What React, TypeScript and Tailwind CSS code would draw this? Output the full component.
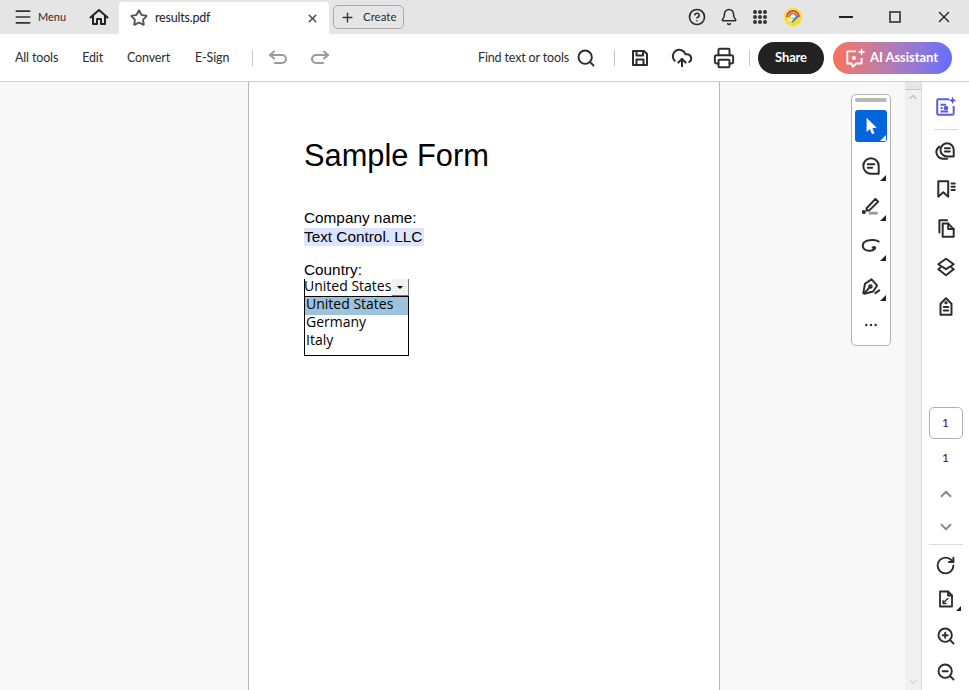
import { ChevronDown, ChevronUp, Ellipsis, Menu, Plus, Printer, RotateCw, Search, Star, X, ZoomIn, ZoomOut, Bell, CircleHelp, CloudUpload } from "lucide-react";
import type { ReactNode } from "react";

const uiFont = "font-['Lato','Noto_Sans',sans-serif]";

function Corner({ white }: { white?: boolean }) {
  return (
    <span
      className={`absolute right-[1px] bottom-[1px] h-0 w-0 border-l-[6px] border-l-transparent ${
        white ? "border-b-[6px] border-b-white" : "border-b-[6px] border-b-[#222]"
      }`}
    />
  );
}

function Icon24({ children, className }: { children: ReactNode; className?: string }) {
  return (
    <svg viewBox="0 0 20 20" fill="none" stroke="#2c2c2c" strokeWidth="1.8" strokeLinecap="round" strokeLinejoin="round" className={className ?? "h-[22px] w-[22px]"}>
      {children}
    </svg>
  );
}

function ToolButton({ children, className }: { children: ReactNode; className: string }) {
  return <div className={`relative flex h-8 w-8 items-center justify-center ${className}`}>{children}</div>;
}

function FloatingTools() {
  return (
    <div className="absolute top-[12px] left-[851px] flex h-[252px] w-10 flex-col items-center rounded-[5px] border border-[#b1b1b1] bg-white px-[3px] pt-[3px]">
      <div className="h-1 w-8 rounded-sm bg-[#b8b8b8]" />
      <ToolButton className="mt-2 rounded-[3px] bg-[#0265dc]">
        <svg viewBox="0 0 20 20" className="h-[22px] w-[22px]" fill="white">
          <path d="M6 2.5 L6 15.5 L9 12.8 L11 17.5 L13.2 16.5 L11.2 12 L15.2 11.6 Z" />
        </svg>
        <Corner white />
      </ToolButton>
      <ToolButton className="mt-2">
        <Icon24>
          <path d="M10 3 a7 7 0 1 0 0 14 h7 v-7 a7 7 0 0 0 -7 -7 Z" />
          <path d="M7 8.5 h6 M7 11.5 h4" />
        </Icon24>
        <Corner />
      </ToolButton>
      <ToolButton className="mt-2">
        <Icon24>
          <path d="M6 12 L14 3.5 L16.5 6 L8.5 14 L6 14 Z" />
          <circle cx="3.5" cy="15.5" r="1" fill="#2c2c2c" />
          <path d="M8 16.5 H16" stroke="#9a9a9a" strokeWidth="2.6" strokeLinecap="butt" />
        </Icon24>
        <Corner />
      </ToolButton>
      <ToolButton className="mt-2">
        <Icon24>
          <path d="M17 6 C14 3.5 2.5 4 2.5 9.5 C2.5 15 11 15.5 13.5 12.5 C14.5 11 13 10.5 11.5 11.5" />
        </Icon24>
        <Corner />
      </ToolButton>
      <ToolButton className="mt-2">
        <Icon24>
          <path d="M3 16.5 L4.5 8 L10.5 4 L15.5 9.5 L12 15 L4 17 Z" />
          <path d="M4 16.5 L8.5 11.5" />
          <circle cx="9.5" cy="10.5" r="1.2" />
          <path d="M14 16.5 L17.5 14" />
        </Icon24>
        <Corner />
      </ToolButton>
      <ToolButton className="mt-[7px]">
        <Ellipsis className="h-4 w-4 text-[#333]" strokeWidth={1.8} />
      </ToolButton>
    </div>
  );
}

function RightRail() {
  return (
    <aside className="flex w-[48px] shrink-0 flex-col items-center border-l border-[#dcdcdc] bg-white">
      <div className="mt-[14px] flex h-[22px] items-center justify-center">
        <svg viewBox="0 0 20 20" fill="none" stroke="#5c5ce0" strokeWidth="1.8" strokeLinejoin="round" className="h-[22px] w-[22px]">
          <path d="M13 3 H3 a1 1 0 0 0 -1 1 V16 a1 1 0 0 0 1 1 H16 a1 1 0 0 0 1 -1 V9" />
          <path d="M5 8 h5 M5 14 h7" />
          <path d="M5 11 h2" />
          <circle cx="10" cy="11" r="1.2" fill="#5c5ce0" />
          <path d="M16 0.5 L17 3 L19.5 4 L17 5 L16 7.5 L15 5 L12.5 4 L15 3 Z" fill="#5c5ce0" stroke="none" />
        </svg>
      </div>
      <div className="mt-[11px] h-px w-6 bg-[#dcdcdc]" />
      <Icon24 className="mt-[10px] h-[22px] w-[22px]">
        <path d="M11 3 a6 6 0 1 0 0 12 h6 v-6 a6 6 0 0 0 -6 -6 Z" />
        <path d="M9 7.5 h4.5 M9 10.5 h4.5" />
        <path d="M4 6 a6 6 0 0 0 3 11 h4" />
      </Icon24>
      <Icon24 className="mt-[16px] h-[22px] w-[22px]">
        <path d="M3 3 H12 V17 L7.5 13 L3 17 Z" />
        <path d="M15 5 h3 M15 8 h3 M15 11 h3" />
      </Icon24>
      <Icon24 className="mt-[17px] h-[22px] w-[22px]">
        <path d="M7 6 H12 L17 11 V18 H7 Z" />
        <path d="M12 6 V11 H17" />
        <path d="M4 14 V3 H11" />
      </Icon24>
      <Icon24 className="mt-[17px] h-[22px] w-[22px]">
        <path d="M10 2.5 L17 7.5 L10 12 L3 7.5 Z" />
        <path d="M5 10.5 L3 12 L10 17.5 L17 12 L15 10.5" />
      </Icon24>
      <Icon24 className="mt-[17px] h-[22px] w-[22px]">
        <path d="M5 8 L10 3 L15 8 V18 H5 Z" />
        <path d="M8 11 h4 M8 14 h4" />
        <circle cx="10" cy="7" r=".6" />
      </Icon24>
      <div className="mt-[90px] flex h-8 w-[34px] items-center justify-center rounded-[5px] border border-[#b1b1b1] text-xs text-[#4a0d33]">
        1
      </div>
      <div className="mt-[10px] text-xs leading-[18px] text-[#4a0d33]">1</div>
      <ChevronUp className="mt-[18px] h-[18px] w-[18px] text-[#8e8e8e]" strokeWidth={2.8} />
      <ChevronDown className="mt-[15px] h-[18px] w-[18px] text-[#8e8e8e]" strokeWidth={2.8} />
      <div className="mt-[8px] h-px w-[34px] bg-[#dcdcdc]" />
      <RotateCw className="mt-[10px] h-[21px] w-[21px] text-[#2c2c2c]" strokeWidth={2.2} />
      <div className="relative mt-[13px] h-5 w-5">
        <Icon24 className="h-5 w-5">
          <path d="M4 2.5 H12 L16 6.5 V17.5 H4 Z" />
          <path d="M12 2.5 V6.5 H16" />
          <path d="M8 13 L12 9.5 M7 11.5 V14.5 H10" strokeWidth="1.3" />
        </Icon24>
        <span className="absolute -right-[5px] bottom-[-2px] h-0 w-0 border-b-[5px] border-l-[5px] border-b-[#222] border-l-transparent" />
      </div>
      <ZoomIn className="mt-[17px] h-5 w-5 text-[#2c2c2c]" strokeWidth={2.3} />
      <ZoomOut className="mt-[16px] h-5 w-5 text-[#2c2c2c]" strokeWidth={2.3} />
    </aside>
  );
}

export default function App() {
  return (
    <div className={`flex h-[690px] w-[969px] flex-col overflow-hidden bg-white ${uiFont} text-[#2c2c2c]`}>
      {/* Title bar */}
      <header className="flex h-[34px] shrink-0 items-center bg-[#e5e5e5]">
        <Menu className="ml-[13px] h-5 w-5 text-[#333]" strokeWidth={2} />
        <span className="mt-px ml-[5px] w-[30px] text-[11px]">Menu</span>
        <svg viewBox="0 0 20 20" fill="none" stroke="#222" strokeWidth="2" strokeLinejoin="round" strokeLinecap="round" className="ml-[21px] h-5 w-5">
          <path d="M1.5 10.5 L10 3 L18.5 10.5" />
          <path d="M4 9 V17 H8 V12 H12 V17 H16 V9" />
        </svg>
        <div className="mt-[2px] ml-[10px] flex h-8 w-[210px] items-center rounded-t-[4px] bg-white pr-[10px] pl-[11px]">
          <Star className="h-[18px] w-[18px] text-[#555]" strokeWidth={2.5} />
          <span className="ml-[7px] text-[12.5px] tracking-[-0.2px] text-[#222]">results.pdf</span>
          <X className="ml-auto h-[13px] w-[13px] text-[#555]" strokeWidth={3} />
        </div>
        <div className="ml-1 flex h-6 w-[71px] items-center rounded-[5px] border border-[#a8a8a8] pl-[6px]">
          <Plus className="h-[15px] w-[15px] text-[#333]" strokeWidth={2.2} />
          <span className="ml-[8px] text-[11.5px]">Create</span>
        </div>
        <CircleHelp className="ml-[284px] h-[18px] w-[18px] text-[#2c2c2c]" strokeWidth={2.2} />
        <Bell className="ml-[14px] h-[18px] w-[18px] text-[#2c2c2c]" strokeWidth={2.1} />
        <div className="ml-[15px] grid h-[14px] w-[14px] grid-cols-3 gap-[1px]">
          {Array.from({ length: 9 }).map((_, i) => (
            <span key={i} className="rounded-full bg-[#333]" />
          ))}
        </div>
        <svg viewBox="0 0 18 18" className="ml-[17px] h-[18px] w-[18px]">
          <circle cx="9" cy="9" r="9" fill="#f6df1c" />
          <path d="M3 9 a6 6 0 0 1 12 0" fill="none" stroke="#e0455f" strokeWidth="2" />
          <path d="M5.5 9 a3.5 3.5 0 0 1 7 0" fill="#ffffff" stroke="#7a4fb5" strokeWidth="1.2" />
          <path d="M8 14 L14 8" stroke="#2f83e6" strokeWidth="1.8" />
          <ellipse cx="6" cy="12" rx="3" ry="1.4" fill="#f4f1e0" />
        </svg>
        <div className="ml-[37px] h-[2px] w-[14px] bg-[#222]" />
        <div className="ml-[36px] h-[12px] w-[12px] border-2 border-[#555]" />
        <X className="ml-[34px] h-[18px] w-[18px] text-[#222]" strokeWidth={1.8} />
      </header>

      {/* Toolbar */}
      <nav className="flex h-[48px] shrink-0 items-center border-b border-[#d0d0d0] text-[12.5px] tracking-[-0.15px]">
        <span className="mt-[2px] ml-[15px]">All tools</span>
        <span className="mt-[2px] ml-[24px]">Edit</span>
        <span className="mt-[2px] ml-[24px]">Convert</span>
        <span className="mt-[2px] ml-[25px]">E-Sign</span>
        <div className="ml-[23px] h-4 w-px bg-[#c8c8c8]" />
        <svg viewBox="0 0 20 20" fill="none" stroke="#9a9a9a" strokeWidth="2" strokeLinecap="round" strokeLinejoin="round" className="ml-[15px] h-5 w-5">
          <path d="M2 7 H14 a4 4 0 0 1 0 8 H7" />
          <path d="M6 3.5 L2 7 L6 10.5" />
        </svg>
        <svg viewBox="0 0 20 20" fill="none" stroke="#9a9a9a" strokeWidth="2" strokeLinecap="round" strokeLinejoin="round" className="ml-[22px] h-5 w-5">
          <path d="M18 7 H6 a4 4 0 0 0 0 8 H13" />
          <path d="M14 3.5 L18 7 L14 10.5" />
        </svg>
        <span className="mt-[2px] ml-auto">Find text or tools</span>
        <Search className="ml-[7px] h-5 w-5" strokeWidth={2.3} />
        <div className="ml-[18px] h-4 w-px bg-[#c8c8c8]" />
        <svg viewBox="0 0 20 20" fill="none" stroke="#2c2c2c" strokeWidth="2" strokeLinejoin="round" className="ml-[15px] h-5 w-5">
          <path d="M3 3 H14 L17 6 V17 H3 Z" />
          <path d="M6.5 3 V7.5 H13 V3" />
          <path d="M6.5 17 V11.5 H13.5 V17" />
        </svg>
        <CloudUpload className="ml-[21px] h-[22px] w-[22px]" strokeWidth={2.2} />
        <Printer className="ml-[20px] h-[22px] w-[22px]" strokeWidth={2.1} />
        <div className="ml-[14px] h-4 w-px bg-[#c8c8c8]" />
        <button className="ml-2 flex h-8 w-[66px] items-center justify-center rounded-full bg-[#222] pt-px text-[13px] font-bold text-white">
          Share
        </button>
        <button className="mr-[17px] ml-[9px] flex h-8 w-[119px] items-center gap-[4px] rounded-full bg-gradient-to-r from-[#fb7158] to-[#636bff] pt-px pl-[11px] text-[13px] font-bold tracking-[-0.05px] text-white">
          <svg viewBox="0 0 20 20" fill="none" stroke="white" strokeWidth="1.7" strokeLinejoin="round" className="h-[22px] w-[22px]">
            <path d="M11 4 H3 V15 H7 L8 18 L11 15 H16 V10" />
            <circle cx="9" cy="10" r="1" fill="white" />
            <path d="M16 1 L17 3.5 L19.5 4.5 L17 5.5 L16 8 L15 5.5 L12.5 4.5 L15 3.5 Z" fill="white" stroke="none" />
          </svg>
          AI Assistant
        </button>
      </nav>

      {/* Document area */}
      <main className="relative flex min-h-0 flex-1">
        <div className="w-[248px] shrink-0 bg-[#f8f8f8]" />
        <section className="w-[472px] shrink-0 border-x border-[#b8b8b8] bg-white pt-[55px] pl-[55px] font-['Liberation_Sans',sans-serif] text-black">
          <h1 className="text-[30.8px] leading-[37px]">Sample Form</h1>
          <p className="mt-[35px] text-[15.33px] leading-[18px]">Company name:</p>
          <p className="mt-[1px] w-[120px] bg-[#dde4ff] text-[15.33px] leading-[18px]">Text Control. LLC</p>
          <p className="mt-[15px] text-[15.33px] leading-[18px]">Country:</p>
          <div className="w-[105px] font-['Open_Sans',sans-serif] text-[14px] leading-[13px]">
            <div className="flex h-[17px] border-l border-black">
              <span className="-ml-[1px]">United States</span>
              <span className="ml-auto flex h-[17px] w-[17px] items-center justify-center border-r border-b border-[#777] bg-[#f0f0f0]">
                <span className="h-0 w-0 border-x-[3px] border-t-[3px] border-x-transparent border-t-black" />
              </span>
            </div>
            <ul className="h-[60px] border border-black bg-white">
              <li className="h-[18px] bg-[#9cc2dc] pl-px">United States</li>
              <li className="h-[18px] pl-px">Germany</li>
              <li className="h-[18px] pl-px">Italy</li>
            </ul>
          </div>
        </section>
        <div className="flex-1 bg-[#f8f8f8]" />
        <FloatingTools />
        {/* Scrollbar */}
        <div className="flex w-[16px] shrink-0 flex-col items-center bg-[#f0f0f0]">
          <div className="h-[8px] w-full border-b border-[#c8c8c8] bg-[#e6e6e6]" />
          <ChevronUp className="mt-[1px] h-3 w-3 text-[#c4c4c4]" strokeWidth={3} />
          <ChevronDown className="mt-auto mb-[2px] h-3 w-3 text-[#c4c4c4]" strokeWidth={2} />
        </div>
        <RightRail />
      </main>
    </div>
  );
}
